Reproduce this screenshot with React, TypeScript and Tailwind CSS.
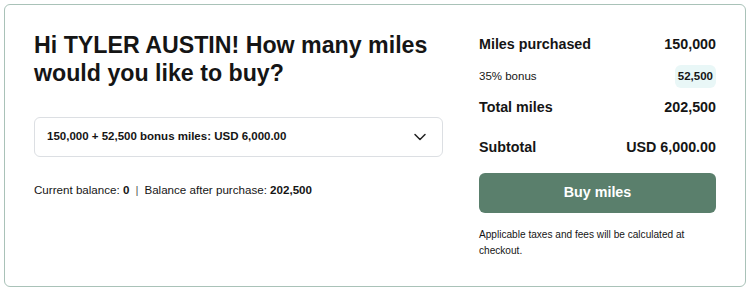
import React from 'react';
import { ChevronDown } from 'lucide-react';

const App = () => {
  return (
    <div className="w-[750px] h-[292px] bg-white p-1 font-['Liberation_Sans',Arial,sans-serif] text-[#151515]">
      <div className="h-[283px] border border-[#a9c2b8] rounded-md flex px-[29px] pt-[26px] gap-9">
        <div className="w-[409px]">
          <h1 className="text-[23.2px] leading-[28px] font-bold">
            Hi TYLER AUSTIN! How many miles would you like to buy?
          </h1>
          <div className="mt-[30px] h-10 border border-[#dcdfe3] rounded-md flex items-center justify-between pl-3 pr-3">
            <span className="text-[11.5px] font-bold">150,000 + 52,500 bonus miles: USD 6,000.00</span>
            <ChevronDown className="w-5 h-5 text-[#222]" strokeWidth={1.8} />
          </div>
          <p className="mt-[24px] text-[11.6px]">
            Current balance: <b>0</b>
            <span className="mx-[6px] text-[#555]">|</span>
            Balance after purchase: <b>202,500</b>
          </p>
        </div>
        <div className="w-[237px]">
          <div className="flex justify-between items-center text-[14.3px] font-bold h-[20px] mt-[4px]">
            <span>Miles purchased</span>
            <span>150,000</span>
          </div>
          <div className="flex justify-between items-center mt-[10px] h-[23px]">
            <span className="text-[11.5px]">35% bonus</span>
            <span className="text-[11.5px] font-bold bg-[#e9f7f7] rounded-md px-[3px] h-[23px] flex items-center">52,500</span>
          </div>
          <div className="flex justify-between items-center text-[14.3px] font-bold h-[20px] mt-[10px]">
            <span>Total miles</span>
            <span>202,500</span>
          </div>
          <div className="flex justify-between items-center text-[14.3px] font-bold h-[20px] mt-[20px]">
            <span>Subtotal</span>
            <span>USD 6,000.00</span>
          </div>
          <button className="mt-[15px] w-full h-10 rounded-md bg-[#5a7f6c] text-white text-[14.3px] font-bold">
            Buy miles
          </button>
          <p className="mt-[14px] text-[10.1px] leading-[16px]">
            Applicable taxes and fees will be calculated at checkout.
          </p>
        </div>
      </div>
    </div>
  );
};

export default App;
